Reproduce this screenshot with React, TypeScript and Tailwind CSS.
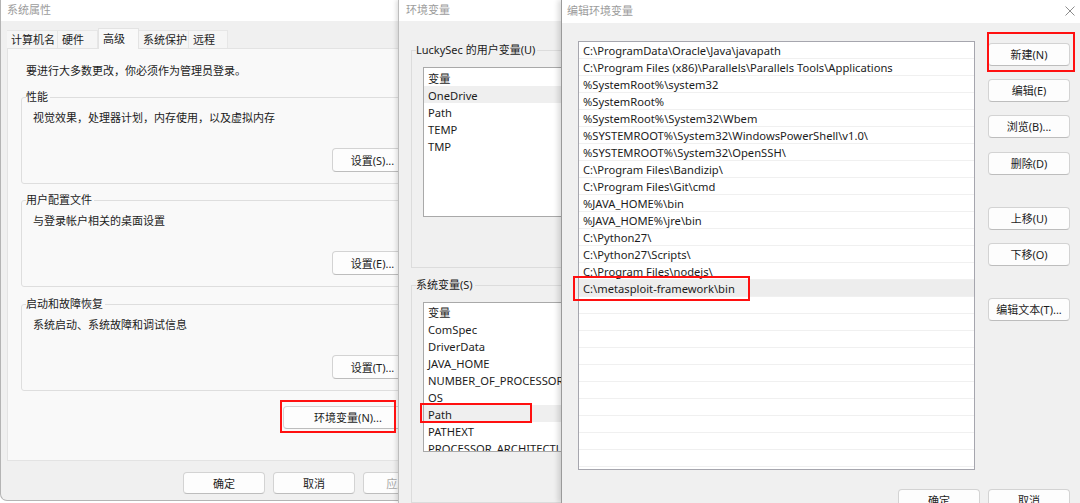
import React from "react"

const font = "font-['Noto_Sans','Noto_Sans_CJK_SC',sans-serif]"

type BtnProps = { label: string; w?: string; h?: string; disabled?: boolean }

function Btn({ label, w = "w-[82px]", h = "h-[23px]", disabled = false }: BtnProps) {
  return (
    <button
      type="button"
      className={`flex ${h} ${w} shrink-0 items-center justify-center rounded-[4px] border border-[#d3d3d3] border-b-[#bdbdbd] bg-[#fdfdfd] text-[11px] leading-none ${
        disabled ? "text-[#a8a8a8]" : "text-[#1c1c1c]"
      }`}
    >
      {label}
    </button>
  )
}

type GroupProps = { title: string; text: string; button: string; className?: string }

function Group({ title, text, button, className = "" }: GroupProps) {
  return (
    <fieldset className={`w-[400px] rounded-[3px] border border-[#dedede] px-[4px] pb-[11px] ${className}`}>
      <legend className="pr-[2px] text-[11px] leading-[14px] text-[#1c1c1c]">{title}</legend>
      <div className="pl-[7px] pr-[3px]">
        <p className="mt-[7px] text-[11px] leading-[14px] text-[#1c1c1c]">{text}</p>
        <div className="mt-[23px] flex justify-end">
          <Btn label={button} w="w-[81px]" h="h-[24px]" />
        </div>
      </div>
    </fieldset>
  )
}

const tabs = [
  { name: "计算机名", w: "w-[51px]" },
  { name: "硬件", w: "w-[40px]" },
  { name: "高级", w: "w-[41px]", active: true },
  { name: "系统保护", w: "w-[50px]" },
  { name: "远程", w: "w-[39px]" },
]

function SystemProperties() {
  return (
    <div className="absolute left-0 top-0 flex h-[501px] w-[455px] flex-col overflow-hidden rounded-b-[7px] border-x border-b border-[#b4b4b4] bg-[#f0f0f0]">
      <div className="flex h-[21px] shrink-0 items-center bg-white pl-[6px] text-[11px] text-[#9c9c9c]">系统属性</div>
      <div className="flex items-end pl-[6px] pt-[7px]">
        {tabs.map((t) =>
          t.active ? (
            <div
              key={t.name}
              className={`relative z-10 -mb-px flex h-[21px] ${t.w} items-start border-x border-t border-[#e3e3e3] bg-[#f9f9f9] pl-[4px] pt-[3px] text-[11px] leading-[14px] text-[#1c1c1c]`}
            >
              {t.name}
            </div>
          ) : (
            <div
              key={t.name}
              className={`flex h-[18px] ${t.w} items-center border-r border-t border-[#e6e6e6] bg-[#f5f5f5] pl-[4px] text-[11px] leading-[14px] text-[#1c1c1c]`}
            >
              {t.name}
            </div>
          )
        )}
      </div>
      <div className="ml-[6px] flex h-[413px] w-[421px] shrink-0 flex-col border border-[#e3e3e3] bg-[#f9f9f9] pl-[13px]">
        <p className="mt-[15px] pl-[5px] text-[11px] leading-[14px] text-[#1c1c1c]">要进行大多数更改，你必须作为管理员登录。</p>
        <Group className="mt-[12px]" title="性能" text="视觉效果，处理器计划，内存使用，以及虚拟内存" button="设置(S)..." />
        <Group className="mt-[9px]" title="用户配置文件" text="与登录帐户相关的桌面设置" button="设置(E)..." />
        <Group className="mt-[10px]" title="启动和故障恢复" text="系统启动、系统故障和调试信息" button="设置(T)..." />
        <div className="mt-[15px] flex w-[400px] justify-end pr-[8px]">
          <Btn label="环境变量(N)..." w="w-[130px]" />
        </div>
      </div>
      <div className="mt-[11px] flex justify-end gap-[8px] pr-[9px]">
        <Btn label="确定" h="h-[22px]" />
        <Btn label="取消" h="h-[22px]" />
        <Btn label="应用(A)" h="h-[22px]" disabled />
      </div>
    </div>
  )
}

type VarListProps = { items: string[]; selected: number; pt?: string }

function VarList({ items, selected, pt = "pt-0" }: VarListProps) {
  return (
    <div className={`ml-[7px] mt-[10px] h-[150px] w-[300px] overflow-hidden border border-[#a9a9a9] bg-white ${pt}`}>
      {items.map((it, i) => (
        <div
          key={it}
          className={`flex h-[17px] items-center whitespace-nowrap pl-[4px] pt-[3px] text-[11.2px] text-[#1c1c1c] ${
            i === selected ? "bg-[#efefef]" : ""
          }`}
        >
          {it}
        </div>
      ))}
    </div>
  )
}

function EnvironmentVariables() {
  return (
    <div className="absolute left-[398px] top-0 z-10 flex h-[503px] w-[300px] flex-col border-l border-[#bdbdbd] bg-[#f0f0f0] shadow-[-2px_0_4px_rgba(0,0,0,0.12)]">
      <div className="flex h-[21px] shrink-0 items-center bg-white pl-[7px] text-[11px] text-[#9c9c9c]">环境变量</div>
      <fieldset className="ml-[12px] mt-[22px] w-[280px] border border-[#dcdcdc] px-[4px] pb-[50px]">
        <legend className="pr-[2px] text-[11px] leading-[14px] text-[#1c1c1c]">LuckySec 的用户变量(U)</legend>
        <VarList pt="pt-[1px]" selected={1} items={["变量", "OneDrive", "Path", "TEMP", "TMP"]} />
      </fieldset>
      <fieldset className="ml-[12px] mt-[10px] w-[280px] border border-[#dcdcdc] px-[4px] pb-[50px]">
        <legend className="pr-[2px] text-[11px] leading-[14px] text-[#1c1c1c]">系统变量(S)</legend>
        <VarList
          selected={6}
          items={[
            "变量",
            "ComSpec",
            "DriverData",
            "JAVA_HOME",
            "NUMBER_OF_PROCESSORS",
            "OS",
            "Path",
            "PATHEXT",
            "PROCESSOR_ARCHITECTURE",
          ]}
        />
      </fieldset>
    </div>
  )
}

const paths = [
  "C:\\ProgramData\\Oracle\\Java\\javapath",
  "C:\\Program Files (x86)\\Parallels\\Parallels Tools\\Applications",
  "%SystemRoot%\\system32",
  "%SystemRoot%",
  "%SystemRoot%\\System32\\Wbem",
  "%SYSTEMROOT%\\System32\\WindowsPowerShell\\v1.0\\",
  "%SYSTEMROOT%\\System32\\OpenSSH\\",
  "C:\\Program Files\\Bandizip\\",
  "C:\\Program Files\\Git\\cmd",
  "%JAVA_HOME%\\bin",
  "%JAVA_HOME%\\jre\\bin",
  "C:\\Python27\\",
  "C:\\Python27\\Scripts\\",
  "C:\\Program Files\\nodejs\\",
  "C:\\metasploit-framework\\bin",
]

function EditEnvironmentVariable() {
  const rows = [...paths, ...Array(11).fill("")]
  return (
    <div className="absolute left-[561px] top-0 z-20 flex h-[503px] w-[519px] flex-col border-l border-[#9a9a9a] bg-[#f0f0f0] shadow-[-3px_0_5px_rgba(0,0,0,0.14)]">
      <div className="flex h-[23px] shrink-0 items-center justify-between bg-white pl-[5px] pr-[5px] text-[11px] text-[#9c9c9c]">
        <span>编辑环境变量</span>
        <svg width="10" height="10" viewBox="0 0 10 10" className="-mt-[2px] text-[#8c8c8c]">
          <path d="M0.5 0.5 L9.5 9.5 M9.5 0.5 L0.5 9.5" stroke="currentColor" strokeWidth="1" fill="none" />
        </svg>
      </div>
      <div className="flex pt-[18px]">
        <div className="ml-[16px] h-[429px] w-[397px] shrink-0 overflow-hidden border border-[#a6a6ae] bg-white">
          {rows.map((p, i) => (
            <div
              key={i}
              className={`flex h-[17px] items-center whitespace-nowrap border-b border-[#f0f0f0] pl-[4px] pt-[3px] text-[11.2px] text-[#1c1c1c] ${
                i === 14 ? "bg-[#ededed]" : ""
              }`}
            >
              {p}
            </div>
          ))}
        </div>
        <div className="ml-[13px] flex flex-col">
          <div className="mt-[2px]">
            <Btn label="新建(N)" />
          </div>
          <div className="mt-[13px]">
            <Btn label="编辑(E)" />
          </div>
          <div className="mt-[13px]">
            <Btn label="浏览(B)..." />
          </div>
          <div className="mt-[14px]">
            <Btn label="删除(D)" />
          </div>
          <div className="mt-[32px]">
            <Btn label="上移(U)" />
          </div>
          <div className="mt-[13px]">
            <Btn label="下移(O)" />
          </div>
          <div className="mt-[32px]">
            <Btn label="编辑文本(T)..." />
          </div>
        </div>
      </div>
      <div className="mt-[19px] flex justify-end gap-[8px] pr-[10px]">
        <Btn label="确定" />
        <Btn label="取消" />
      </div>
    </div>
  )
}

function RedMark({ className }: { className: string }) {
  return <div className={`pointer-events-none absolute z-30 border-2 border-[#ff1010] ${className}`} />
}

export default function App() {
  return (
    <div className={`relative h-[503px] w-[1080px] overflow-hidden bg-white ${font}`}>
      <SystemProperties />
      <EnvironmentVariables />
      <EditEnvironmentVariable />
      <RedMark className="left-[280px] top-[400px] h-[33px] w-[116px]" />
      <RedMark className="left-[420px] top-[403px] h-[20px] w-[112px]" />
      <RedMark className="left-[573px] top-[276px] h-[25px] w-[177px]" />
      <RedMark className="left-[987px] top-[32px] h-[40px] w-[88px]" />
    </div>
  )
}
